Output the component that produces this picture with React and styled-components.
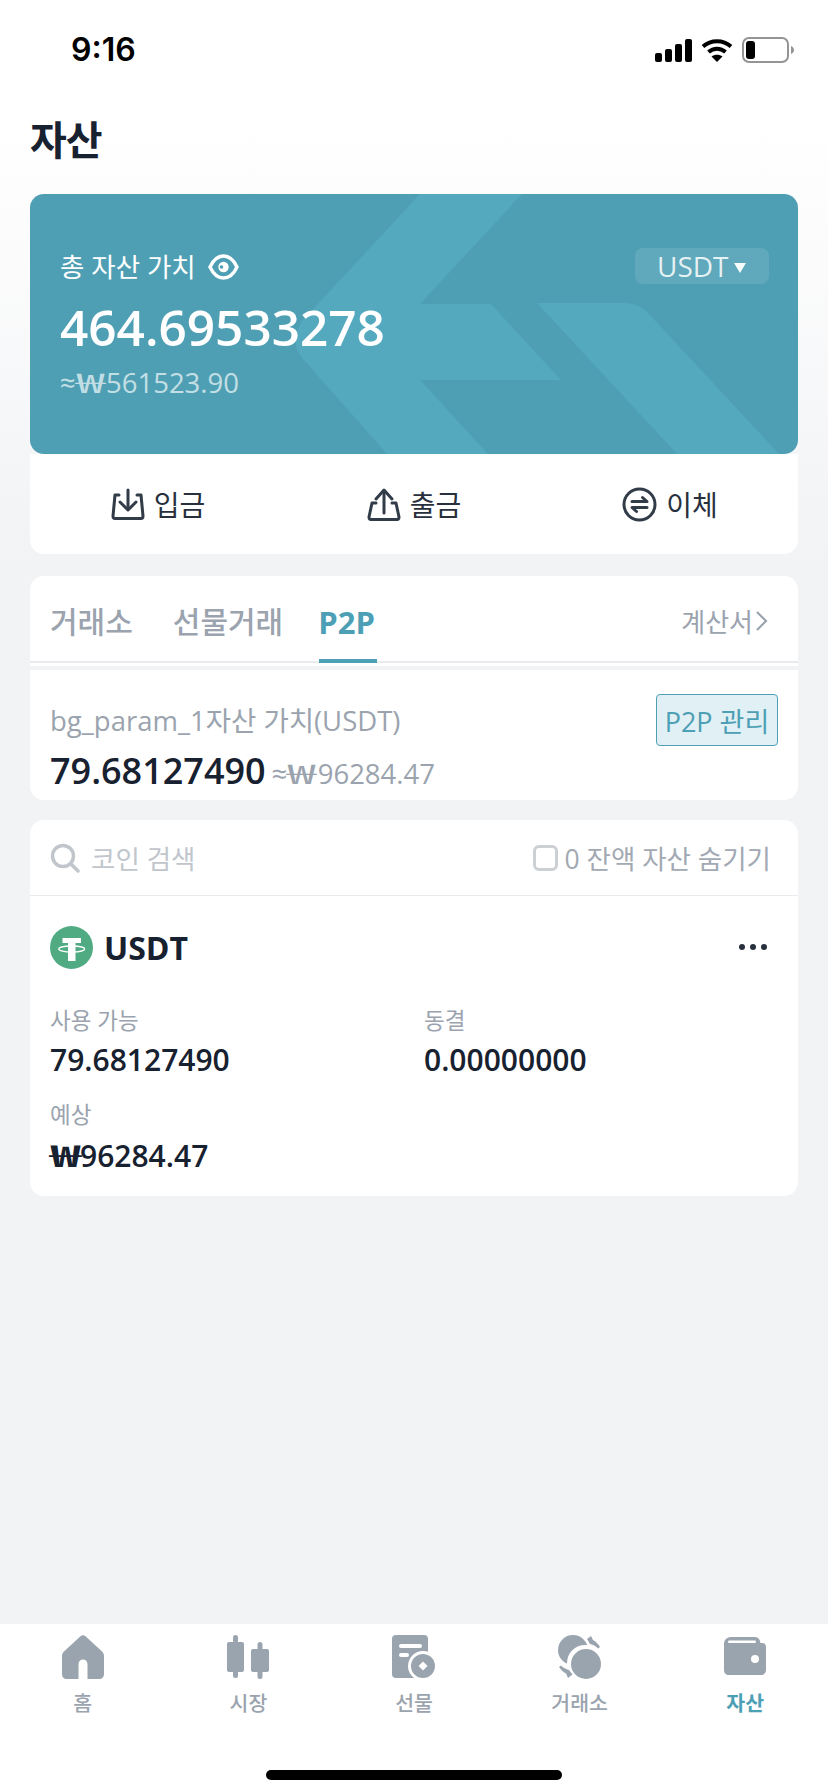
import React from 'react';
import styled, { createGlobalStyle } from 'styled-components';

const fontStack = `"Open Sans", "Noto Sans CJK KR", sans-serif`;

const GlobalStyle = createGlobalStyle`
  html, body {
    margin: 0;
    padding: 0;
    background: #f2f3f5;
  }
  body {
    font-family: ${fontStack};
    color: #18212f;
  }
  * { box-sizing: border-box; }
`;

const Page = styled.div`
  width: 828px;
  height: 1792px;
  display: flex;
  flex-direction: column;
  overflow: hidden;
  background: linear-gradient(to bottom, #ffffff 0, #ffffff 120px, #f2f3f5 560px);
`;

const StatusBar = styled.div`
  height: 100px;
  flex: none;
  display: flex;
  align-items: flex-start;
  justify-content: space-between;
  padding: 31px 34px 0 71px;
`;

const Clock = styled.span`
  font-family: "Inter", sans-serif;
  font-weight: 600;
  font-size: 32px;
  line-height: 38px;
  color: #000;
`;

const StatusIcons = styled.div`
  display: flex;
  align-items: center;
  gap: 9px;
  padding-top: 6px;
`;

const Main = styled.main`
  flex: 1;
  padding: 0 30px;
`;

const Title = styled.h1`
  margin: 0;
  height: 94px;
  font-size: 40px;
  line-height: 80px;
  font-weight: 700;
  letter-spacing: -1px;
  color: #18212f;
`;

const Hero = styled.section`
  position: relative;
  height: 260px;
  border-radius: 14px;
  background: #4f9fb4;
  overflow: hidden;
  color: #fff;
  padding: 52px 30px 0;
`;

const HeroArt = styled.svg`
  position: absolute;
  inset: 0;
`;

const HeroBody = styled.div`
  position: relative;
`;

const HeroTop = styled.div`
  display: flex;
  justify-content: space-between;
  align-items: center;
  height: 36px;
  margin-top: 2px;
  margin-right: -1px;
`;

const HeroLabel = styled.div`
  display: flex;
  align-items: center;
  gap: 12px;
  font-size: 26.5px;
  line-height: 36px;
  margin-top: 2px;
`;

const CoinPill = styled.div`
  display: flex;
  align-items: center;
  gap: 5px;
  height: 36px;
  width: 134px;
  padding-left: 22px;
  border-radius: 8px;
  background: rgba(255, 255, 255, 0.1);
  font-size: 28px;
  color: rgba(255, 255, 255, 0.85);
`;

const Caret = styled.i`
  width: 0;
  height: 0;
  margin-top: 3px;
  border-left: 6px solid transparent;
  border-right: 6px solid transparent;
  border-top: 10px solid rgba(255, 255, 255, 0.95);
`;

const HeroValue = styled.div`
  font-size: 49.5px;
  line-height: 66px;
  font-weight: 600;
  margin-top: 10px;
`;

const HeroSub = styled.div`
  font-size: 27.5px;
  line-height: 38px;
  color: rgba(255, 255, 255, 0.68);
  margin-top: 2px;
`;

// the won sign is a wide, dense glyph in the reference
const Won = styled.span`
  display: inline-block;
  width: ${({ $strong }) => ($strong ? 1 : 1.1)}em;
  font-family: "Noto Sans CJK KR", sans-serif;
  font-weight: ${({ $strong }) => ($strong ? 700 : 400)};
  transform: scaleX(${({ $strong }) => ($strong ? 1.75 : 1.9)});
  transform-origin: left center;
`;

const Actions = styled.div`
  display: grid;
  grid-template-columns: repeat(3, 1fr);
  height: 100px;
  background: #fff;
  border-radius: 0 0 14px 14px;
`;

const Action = styled.div`
  display: flex;
  align-items: center;
  justify-content: center;
  gap: 9px;
  font-size: 28px;
  color: #28303d;
`;

const Card = styled.section`
  margin-top: ${({ $gap }) => $gap}px;
  background: #fff;
  border-radius: 14px;
  overflow: hidden;
`;

const TabRow = styled.div`
  display: flex;
  align-items: center;
  height: 87px;
  padding: 0 30px 0 20px;
  border-bottom: 2px solid #e9ebee;
`;

const Tab = styled.span`
  position: relative;
  margin-right: ${({ $gap }) => $gap}px;
  font-size: ${({ $active }) => ($active ? 31 : 30)}px;
  font-weight: ${({ $active }) => ($active ? 700 : 500)};
  color: ${({ $active }) => ($active ? '#4d9fb5' : '#9aa3ae')};
  line-height: 46px;
  top: 3px;

  ${({ $active }) =>
    $active &&
    `&::after {
      content: '';
      position: absolute;
      left: 1px;
      right: -2px;
      top: 60px;
      height: 4px;
      background: #4d9fb5;
    }`}
`;

const TabLink = styled.span`
  margin-left: auto;
  display: flex;
  align-items: center;
  gap: 2px;
  font-size: 26px;
  color: #9aa3ae;
  position: relative;
  top: 2px;
`;

const Strip = styled.div`
  height: 4px;
  margin-top: 3px;
  background: #f2f3f5;
`;

const P2pInfo = styled.div`
  height: 130px;
  padding: 24px 20px 0;
`;

const P2pTop = styled.div`
  display: flex;
  justify-content: space-between;
  align-items: flex-start;
`;

const P2pLabel = styled.span`
  font-size: 27.5px;
  color: #9aa3ae;
  line-height: 36px;
  margin-top: 9px;
`;

const ManageButton = styled.span`
  display: flex;
  align-items: center;
  justify-content: center;
  width: 122px;
  height: 52px;
  border: 1px solid #4d9fb5;
  border-radius: 4px;
  background: #e1f0f4;
  color: #4d9fb5;
  font-size: 27px;
  white-space: nowrap;
`;

const P2pValueRow = styled.div`
  display: flex;
  align-items: baseline;
  gap: 6px;
`;

const P2pValue = styled.span`
  font-size: 36px;
  font-weight: 600;
  line-height: 50px;
`;

const P2pSub = styled.span`
  font-size: 27.5px;
  color: #9aa3ae;
`;

const SearchRow = styled.div`
  display: flex;
  align-items: center;
  justify-content: space-between;
  height: 76px;
  padding: 0 27px 0 20px;
  border-bottom: 1px solid #e9ebee;
`;

const SearchBox = styled.div`
  display: flex;
  align-items: center;
  gap: 11px;
  font-size: 26.5px;
  color: #c1c6cd;
`;

const HideZero = styled.div`
  display: flex;
  align-items: center;
  gap: 7px;
  font-size: 26.5px;
  color: #a2a9b3;
`;

const CheckBox = styled.i`
  width: 25px;
  height: 26px;
  border: 3px solid #ccd0d5;
  border-radius: 6px;
`;

const CoinBlock = styled.div`
  height: 300px;
  padding: 29px 20px 0;
`;

const CoinHead = styled.div`
  display: flex;
  align-items: center;
  gap: 11px;
  height: 44px;
`;

const CoinName = styled.span`
  font-size: 32px;
  font-weight: 700;
  color: #18212f;
`;

const MoreDots = styled.svg`
  margin-left: auto;
  margin-right: 11px;
`;

const StatGrid = styled.div`
  display: grid;
  grid-template-columns: 374px 1fr;
  row-gap: 17px;
  margin-top: 35px;
`;

const Stat = styled.div`
  display: flex;
  flex-direction: column;
`;

const StatLabel = styled.span`
  font-size: 22.5px;
  line-height: 34px;
  color: #9aa3ae;
`;

const StatValue = styled.span`
  font-size: 30px;
  line-height: 42px;
  font-weight: 600;
  color: #18212f;
  margin-top: 1px;
`;

const Nav = styled.nav`
  flex: none;
  height: 168px;
  background: #fff;
  padding-top: 11px;
  display: flex;
  flex-direction: column;
`;

const NavItems = styled.div`
  display: grid;
  grid-template-columns: repeat(5, 1fr);
`;

const NavItem = styled.div`
  display: flex;
  flex-direction: column;
  align-items: center;
  font-size: 20.5px;
  line-height: 30px;
  font-weight: ${({ $active }) => ($active ? 700 : 500)};
  color: ${({ $active }) => ($active ? '#4d9fb5' : '#9aa3ae')};
`;

const NavIcon = styled.svg`
  display: block;
  margin-bottom: 9px;
`;

const HomeBar = styled.div`
  width: 296px;
  height: 10px;
  border-radius: 5px;
  background: #000;
  margin: 52px auto 0;
`;

const GREY = '#9aa4ae';

const SignalIcon = () => (
  <svg width="37" height="23" viewBox="0 0 37 23" fill="#000">
    <rect x="0" y="14" width="7" height="9" rx="2" />
    <rect x="10" y="10" width="7" height="13" rx="2" />
    <rect x="20" y="5" width="7" height="18" rx="2" />
    <rect x="30" y="0" width="7" height="23" rx="2" />
  </svg>
);

const WifiIcon = () => (
  <svg width="32" height="23" viewBox="0 0 32 23" fill="none" stroke="#000" strokeWidth="4">
    <path d="M2 7.5C10 0.5 22 0.5 30 7.5" />
    <path d="M7.5 13C12.5 8.5 19.5 8.5 24.5 13" />
    <path d="M16 23L10.5 17.5C13.5 15 18.5 15 21.5 17.5Z" fill="#000" stroke="none" />
  </svg>
);

const BatteryIcon = () => (
  <svg width="52" height="26" viewBox="0 0 52 26" fill="none">
    <rect x="1" y="1" width="45" height="24" rx="6" stroke="#949494" strokeWidth="2" />
    <rect x="4" y="4" width="9" height="18" rx="3" fill="#000" />
    <path d="M49 9C51 10 52 11.5 52 13C52 14.5 51 16 49 17Z" fill="#949494" />
  </svg>
);

const EyeIcon = () => (
  <svg width="31" height="26" viewBox="0 0 31 26" fill="none">
    <path d="M2 13C5.5 5.5 10 2 15.5 2S25.5 5.5 29 13C25.5 20.5 21 24 15.5 24S5.5 20.5 2 13Z" stroke="#fff" strokeWidth="3.4" />
    <circle cx="15.5" cy="13" r="5.2" fill="#fff" />
    <circle cx="13.5" cy="13" r="1.8" fill="#4f9fb4" />
  </svg>
);

const DepositIcon = () => (
  <svg width="34" height="32" viewBox="0 0 34 32" fill="none" stroke="#323b48" strokeWidth="3" strokeLinecap="round" strokeLinejoin="round">
    <path d="M8 7H4L2 28C2 29.5 3 30.5 4 30.5H30C31 30.5 32 29.5 32 28L30 7H26" />
    <path d="M17 2V21" />
    <path d="M9 14L17 22L25 14" />
  </svg>
);

const WithdrawIcon = () => (
  <svg width="34" height="33" viewBox="0 0 34 33" fill="none" stroke="#323b48" strokeWidth="3" strokeLinecap="round" strokeLinejoin="round">
    <path d="M9 15H5L2 29C2 30.5 3 31.5 4 31.5H30C31 31.5 32 30.5 32 29L29 15H25" />
    <path d="M17 3V25" />
    <path d="M9 11L17 2L25 11" />
  </svg>
);

const TransferIcon = () => (
  <svg width="35" height="35" viewBox="0 0 35 35" fill="none" stroke="#323b48" strokeWidth="3" strokeLinecap="round" strokeLinejoin="round">
    <circle cx="17.5" cy="17.5" r="15.5" />
    <path d="M10 14.5H25L20.5 10.5" />
    <path d="M25 20.5H10L14.5 24.5" />
  </svg>
);

const SearchIcon = () => (
  <svg width="30" height="30" viewBox="0 0 30 30" fill="none" stroke="#c1c6cd" strokeWidth="3.5" strokeLinecap="round">
    <circle cx="13" cy="13" r="10.5" />
    <path d="M21 21L28 28" />
  </svg>
);

const ChevronIcon = () => (
  <svg width="13" height="22" viewBox="0 0 13 22" fill="none" stroke="#9aa3ae" strokeWidth="2.2">
    <path d="M2 2L11 11L2 20" />
  </svg>
);

const TetherIcon = () => (
  <svg width="43" height="43" viewBox="0 0 43 43">
    <circle cx="21.5" cy="21.5" r="21.5" fill="#50ab82" />
    <path d="M12.5 12H31V17H25.5V35H18V17H12.5Z" fill="#fff" />
    <ellipse cx="21.7" cy="23" rx="13" ry="3" fill="none" stroke="#fff" strokeWidth="1.3" />
  </svg>
);

const HomeNavIcon = () => (
  <NavIcon width="42" height="44" viewBox="0 0 42 44">
    <path
      fill={GREY}
      fillRule="evenodd"
      d="M18.5 1.2C20 0 22 0 23.5 1.2L39.5 16C41 17.3 42 19 42 21V39C42 42 40 44 37 44H25.5V29C25.5 26.5 23.5 24.5 21 24.5S16.5 26.5 16.5 29V44H5C2 44 0 42 0 39V21C0 19 1 17.3 2.5 16Z"
    />
  </NavIcon>
);

const MarketNavIcon = () => (
  <NavIcon width="42" height="44" viewBox="0 0 42 44" fill={GREY}>
    <rect x="0" y="7" width="17" height="30" rx="2" />
    <rect x="6" y="0" width="5" height="8" rx="2.5" />
    <rect x="6" y="35" width="5" height="8" rx="2.5" />
    <rect x="24" y="14" width="18" height="23" rx="2" />
    <rect x="30.5" y="7" width="5" height="9" rx="2.5" />
    <rect x="30.5" y="35" width="5" height="9" rx="2.5" />
  </NavIcon>
);

const FuturesNavIcon = () => (
  <NavIcon width="44" height="44" viewBox="0 0 44 44">
    <rect x="0" y="0" width="36" height="43" rx="4" fill={GREY} />
    <rect x="7" y="9" width="23" height="4" rx="2" fill="#fff" />
    <rect x="7" y="18" width="10" height="4" rx="2" fill="#fff" />
    <circle cx="31" cy="31" r="15" fill="#fff" />
    <circle cx="31" cy="31" r="12" fill={GREY} />
    <path d="M31 26.5L35.5 31L31 35.5L26.5 31Z" fill="#fff" />
  </NavIcon>
);

const ExchangeNavIcon = () => (
  <NavIcon width="44" height="44" viewBox="0 0 44 44">
    <circle cx="15" cy="15" r="15" fill={GREY} />
    <circle cx="27" cy="28" r="18" fill="#fff" />
    <circle cx="28" cy="29" r="15" fill={GREY} />
    <path d="M33 1L35 5C38 6.5 40 9 42 12L40 13.5C38 11.5 35.5 9.5 32 9L29 4Z" fill={GREY} />
    <path d="M10 43L8 38.5C5 37 3 35 1 32L3 30.5C5 32.5 8 34.5 11 35L14.5 39.5Z" fill={GREY} />
  </NavIcon>
);

const WalletNavIcon = () => (
  <NavIcon width="42" height="44" viewBox="0 0 42 44">
    <path
      fill={GREY}
      d="M7 2H31C34 2 36 4 36.5 8H38C40.5 8 42 9.5 42 12V35C42 38 40 40 37 40H5C2 40 0 38 0 35V9C0 5 3 2 7 2Z"
    />
    <rect x="4" y="5.5" width="28" height="2.5" rx="1.2" fill="#fff" />
    <circle cx="31" cy="24" r="4" fill="#fff" />
  </NavIcon>
);

const tabs = [
  { label: '거래소', gap: 40 },
  { label: '선물거래', gap: 35 },
  { label: 'P2P', gap: 0, active: true },
];

const navItems = [
  { label: '홈', Icon: HomeNavIcon },
  { label: '시장', Icon: MarketNavIcon },
  { label: '선물', Icon: FuturesNavIcon },
  { label: '거래소', Icon: ExchangeNavIcon },
  { label: '자산', Icon: WalletNavIcon, active: true },
];

const App = () => {
  return (
    <Page>
      <GlobalStyle />
      <StatusBar>
        <Clock>9:16</Clock>
        <StatusIcons>
          <SignalIcon />
          <WifiIcon />
          <BatteryIcon />
        </StatusIcons>
      </StatusBar>
      <Main>
        <Title>자산</Title>
        <Hero>
          <HeroArt width="768" height="260" viewBox="0 0 768 260" fill="#54a9bf">
            <path d="M390 0H492L390 110H461L531 186H390L458 260H357L274 166Q258 150 272 127Z" />
            <path d="M507 109H596Q610 110 617 118L749 260H647Z" />
          </HeroArt>
          <HeroBody>
            <HeroTop>
              <HeroLabel>
                총 자산 가치
                <EyeIcon />
              </HeroLabel>
              <CoinPill>
                USDT
                <Caret />
              </CoinPill>
            </HeroTop>
            <HeroValue>464.69533278</HeroValue>
            <HeroSub>≈<Won>₩</Won>561523.90</HeroSub>
          </HeroBody>
        </Hero>
        <Actions>
          <Action>
            <DepositIcon />
            입금
          </Action>
          <Action>
            <WithdrawIcon />
            출금
          </Action>
          <Action>
            <TransferIcon />
            이체
          </Action>
        </Actions>

        <Card $gap={22}>
          <TabRow>
            {tabs.map((tab) => (
              <Tab key={tab.label} $gap={tab.gap} $active={tab.active}>
                {tab.label}
              </Tab>
            ))}
            <TabLink>
              계산서
              <ChevronIcon />
            </TabLink>
          </TabRow>
          <Strip />
          <P2pInfo>
            <P2pTop>
              <P2pLabel>bg_param_1자산 가치(USDT)</P2pLabel>
              <ManageButton>P2P 관리</ManageButton>
            </P2pTop>
            <P2pValueRow>
              <P2pValue>79.68127490</P2pValue>
              <P2pSub>≈<Won>₩</Won>96284.47</P2pSub>
            </P2pValueRow>
          </P2pInfo>
        </Card>

        <Card $gap={20}>
          <SearchRow>
            <SearchBox>
              <SearchIcon />
              코인 검색
            </SearchBox>
            <HideZero>
              <CheckBox />0 잔액 자산 숨기기
            </HideZero>
          </SearchRow>
          <CoinBlock>
            <CoinHead>
              <TetherIcon />
              <CoinName>USDT</CoinName>
              <MoreDots width="28" height="6" viewBox="0 0 28 6" fill="#28303d">
                <circle cx="3" cy="3" r="3" />
                <circle cx="14" cy="3" r="3" />
                <circle cx="25" cy="3" r="3" />
              </MoreDots>
            </CoinHead>
            <StatGrid>
              <Stat>
                <StatLabel>사용 가능</StatLabel>
                <StatValue>79.68127490</StatValue>
              </Stat>
              <Stat>
                <StatLabel>동결</StatLabel>
                <StatValue>0.00000000</StatValue>
              </Stat>
              <Stat>
                <StatLabel>예상</StatLabel>
                <StatValue><Won $strong>₩</Won>96284.47</StatValue>
              </Stat>
            </StatGrid>
          </CoinBlock>
        </Card>
      </Main>
      <Nav>
        <NavItems>
          {navItems.map(({ label, Icon, active }) => (
            <NavItem key={label} $active={active}>
              <Icon />
              {label}
            </NavItem>
          ))}
        </NavItems>
        <HomeBar />
      </Nav>
    </Page>
  );
};

export default App;
